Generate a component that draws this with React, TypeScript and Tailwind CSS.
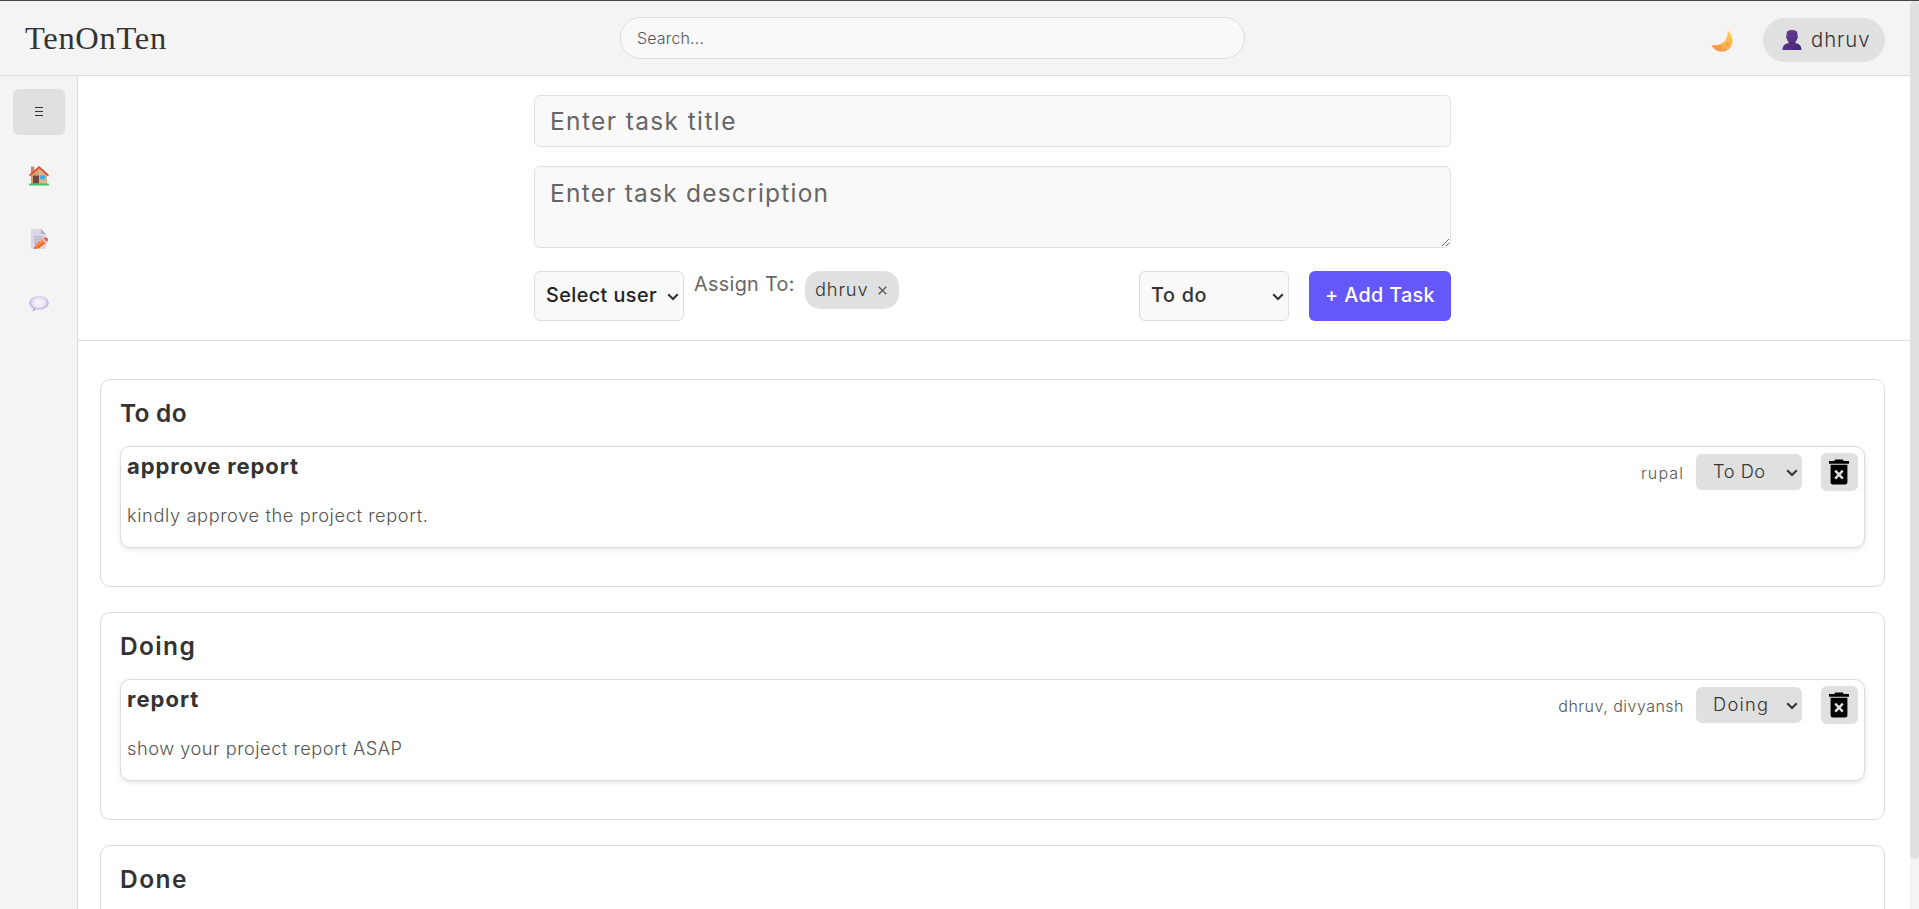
import React from "react";

type IconProps = { className?: string };

const Chevron = ({ className = "" }: IconProps) => (
  <svg width="12" height="8" viewBox="0 0 12 8" className={className} fill="none" stroke="#333" strokeWidth="2.1">
    <path d="M1.2 1.2 6 6l4.8-4.8" />
  </svg>
);

const House = () => (
  <svg width="20" height="20" viewBox="0 0 20 20">
    <rect x="2" y="0.6" width="3.2" height="7" fill="#c08a62" />
    <path d="M10 1.5 18 9v9H2V9z" fill="#d2a273" />
    <path d="M10 1.5 18 9v9H10z" fill="#dfb384" />
    <path d="M0.6 9.6 10 1.2l9.4 8.4" fill="none" stroke="#e0472f" strokeWidth="1.8" />
    <rect x="4" y="9.6" width="6" height="8" fill="#70463f" />
    <rect x="11.3" y="9.4" width="4.8" height="4" fill="#27aef3" />
    <rect x="0" y="17.4" width="20" height="2" rx="0.6" fill="#3cc46a" />
  </svg>
);

const Memo = () => (
  <svg width="20" height="22" viewBox="0 0 20 22">
    <path d="M2 1.6C2 1.2 2.3 1 2.700 1H12l5 5v14.600c0 .3-.3.500-.6.500H2.600c-.4 0-.6-.2-.6-.5z" fill="#ded6e6" />
    <path d="M12 1v4.400c0 .4.300.6.600.6H17z" fill="#b5adbc" />
    <path d="M5 8.800h9M5 11h9M5 13.200h6M5 15.300h4" stroke="#a9a1b2" strokeWidth="0.9" />
    <path d="m5.300 20.800 1-4.300 8.700-6.200 3 3.800-8.500 6.300z" fill="#fb8a3c" />
    <path d="m9.500 20.400 8.500-6.300-1.300-1.700-8.600 6.400z" fill="#f2662f" />
    <path d="m13.300 11.500 2.200-1.600 2.900 3.700-2.200 1.700z" fill="#d9cfe3" />
    <path d="m14.700 10.400 1.400-1c1.500-1 4 2.100 2.700 3.400l-1.300 1z" fill="#fb5745" />
    <path d="m5.300 20.800.5-2 1.700 1.500z" fill="#6b3f45" />
  </svg>
);

const Bubble = () => (
  <svg width="20" height="18" viewBox="0 0 20 18">
    <defs>
      <radialGradient id="bubble" cx="0.5" cy="0.42" r="0.58">
        <stop offset="0" stopColor="#fbf8fd" />
        <stop offset="0.55" stopColor="#ece3f4" />
        <stop offset="1" stopColor="#a893cf" />
      </radialGradient>
    </defs>
    <path d="M10 1.200c5.500 0 9.700 2.900 9.700 6.800s-4.200 6.700-9.700 6.700c-1.200 0-2.300-.1-3.300-.4-.7.800-1.500 1.600-3 1.900.4-.9.400-1.900.3-3C1.700 12 .3 10.200.3 8c0-3.900 4.200-6.800 9.700-6.800z" fill="url(#bubble)" />
  </svg>
);

const Moon = () => (
  <svg width="24" height="24" viewBox="0 0 24 24">
    <defs>
      <linearGradient id="moon" x1="1" y1="0" x2="0.2" y2="1">
        <stop offset="0" stopColor="#fcd35f" />
        <stop offset="0.6" stopColor="#fbb44c" />
        <stop offset="1" stopColor="#f28a4e" />
      </linearGradient>
    </defs>
    <path d="M17.600 1.200c3.900 3.200 6.200 9.200 4.300 14.500C18.700 24.300 6.500 25.400 1.200 15.900c6.300.9 11.300-.7 14-4.500 2-2.900 2.800-6.300 2.400-10.200z" fill="url(#moon)" />
    <circle cx="17.600" cy="15" r="1.900" fill="#f5a13f" />
    <circle cx="10.500" cy="19" r="1.300" fill="#f29642" />
    <circle cx="20.700" cy="11" r="0.9" fill="#f3aa45" />
    <circle cx="20" cy="7" r="0.7" fill="#f3b24a" />
    <circle cx="14.300" cy="20.500" r="0.8" fill="#ee9440" />
  </svg>
);

const Bust = () => (
  <svg width="20" height="20" viewBox="0 0 20 20">
    <defs>
      <linearGradient id="bust" x1="0" y1="0" x2="1" y2="1">
        <stop offset="0" stopColor="#6d3f9d" />
        <stop offset="1" stopColor="#43256f" />
      </linearGradient>
    </defs>
    <path d="M10 0c3.300 0 5.200 1 5.400 3.300L15.500 6c.8.500.6 2.200-.3 2.500-.3 1.700-1 2.900-2 3.700v.8c3.900.6 6.300 2.500 6.300 7H.5c0-4.500 2.400-6.400 6.300-7v-.8c-1-.8-1.700-2-2-3.700-.9-.3-1.100-2-.3-2.500l.1-2.700C4.800 1 6.700 0 10 0z" fill="url(#bust)" />
    <path d="M6.800 12.200c2 1.300 4.400 1.300 6.400 0" fill="none" stroke="#38205f" strokeWidth="0.8" />
  </svg>
);

const Trash = () => (
  <svg width="20" height="26" viewBox="0 0 20 26" className="mr-px">
    <path d="M0 1.900h5.200L6.300.6h7.400l1.100 1.300H20v2.900H0z" fill="#000" />
    <path d="M1.600 5.800h16.800v17.400c0 1.300-1 2.300-2.300 2.300H3.900c-1.300 0-2.300-1-2.300-2.300z" fill="#000" />
    <path d="m6.200 11.700 7.600 8M13.800 11.700l-7.600 8" stroke="#e0e0e0" strokeWidth="2.400" />
  </svg>
);

type Task = {
  title: string;
  titleClass: string;
  text: string;
  textClass: string;
  people: string;
  peopleClass: string;
  status: string;
  statusClass: string;
};

const columns: { name: string; nameClass: string; tasks: Task[] }[] = [
  {
    name: "To do",
    nameClass: "tracking-[0.25px]",
    tasks: [
      {
        title: "approve report",
        titleClass: "tracking-[0.89px]",
        text: "kindly approve the project report.",
        textClass: "tracking-[0.6px]",
        people: "rupal",
        peopleClass: "tracking-[1.1px]",
        status: "To Do",
        statusClass: "tracking-[0.5px]",
      },
    ],
  },
  {
    name: "Doing",
    nameClass: "tracking-[1.35px]",
    tasks: [
      {
        title: "report",
        titleClass: "tracking-[1px]",
        text: "show your project report ASAP",
        textClass: "tracking-[0.5px]",
        people: "dhruv, divyansh",
        peopleClass: "tracking-[0.49px]",
        status: "Doing",
        statusClass: "tracking-[1.25px]",
      },
    ],
  },
  { name: "Done", nameClass: "tracking-[1.45px]", tasks: [] },
];

const TaskCard = ({ task }: { task: Task }) => (
  <article className="flex h-[102px] justify-between rounded-[10px] border border-[#dcdcdc] bg-white pt-1.5 pr-1.5 pl-[6px] shadow-[0_2px_5px_rgba(0,0,0,0.1)]">
    <div>
      <h3 className={`h-[27px] text-[22px] leading-[27px] font-bold ${task.titleClass}`}>{task.title}</h3>
      <p className={`mt-[23px] text-[18.25px] leading-[24px] font-light text-[#555] ${task.textClass}`}>{task.text}</p>
    </div>
    <div className="flex h-[38px] items-center">
      <span className={`mt-px mr-3 text-[16px] font-light text-[#555] ${task.peopleClass}`}>{task.people}</span>
      <button className="flex h-9 w-[106px] items-center justify-between rounded-md bg-[#e0e0e0] pr-1 pl-[17px]">
        <span className={`text-[18.25px] font-light ${task.statusClass}`}>{task.status}</span>
        <Chevron className="mt-[2px]" />
      </button>
      <button className="ml-[19px] flex h-[38px] w-[37px] items-center justify-center rounded-md bg-[#e0e0e0]">
        <Trash />
      </button>
    </div>
  </article>
);

export default function App() {
  return (
    <div className="flex h-[909px] w-[1919px] overflow-hidden border-t border-[#464446] bg-white font-[Inter,sans-serif] text-[#333]">
      <div className="flex min-w-0 flex-1 flex-col">
        <header className="flex h-[75px] shrink-0 items-start justify-between border-b border-[#dcdcdc] bg-[#f4f4f4] pr-[25px] pl-[25px]">
          <div className="mt-[15px] w-[595px] font-['Liberation_Serif',serif] text-[32.5px] leading-[44px] tracking-[0.7px]">TenOnTen</div>
          <input
            className="mt-4 h-[42px] w-[625px] rounded-[21px] border border-[#dcdcdc] bg-[#f9f9f9] px-[16px] text-[16px] font-light tracking-[0.15px] placeholder:text-[#555]"
            placeholder="Search..."
          />
          <div className="flex flex-1 items-start justify-end">
            <button className="mt-[28px] mr-[29px]">
              <Moon />
            </button>
            <button className="mt-[17px] flex h-11 w-[122px] items-center gap-[9px] rounded-[22px] bg-[#e0e0e0] pl-[19px]">
              <Bust />
              <span className="text-[20.3px] font-light tracking-[0.95px]">dhruv</span>
            </button>
          </div>
        </header>
        <div className="flex min-h-0 flex-1">
          <nav className="flex w-[78px] shrink-0 flex-col items-center border-r border-[#dcdcdc] bg-[#f4f4f4] pt-[13px]">
            <button className="flex h-[46px] w-[52px] items-center justify-center rounded-md bg-[#e0e0e0]">
              <svg width="8" height="10" viewBox="0 0 8 10" shapeRendering="crispEdges" fill="#333">
                <path d="M0 0h8v1H0zM0 4h8v1H0zM0 8h8v1H0z" />
              </svg>
            </button>
            <button className="mt-[18px] flex h-[46px] items-center pb-px"><House /></button>
            <button className="mt-[18px] flex h-[46px] items-center pb-[2px]"><Memo /></button>
            <button className="mt-[18px] flex h-[46px] items-center pb-px"><Bubble /></button>
          </nav>
          <main className="flex min-w-0 flex-1 flex-col">
            <section className="flex h-[265px] shrink-0 justify-center border-b border-[#dcdcdc] pt-[19px] pr-[3px]">
              <div className="w-[917px]">
                <input
                  className="block h-[52px] w-full rounded-md border border-[#dfe1e1] bg-[#f9f9f9] pr-4 pl-[15px] text-[24.5px] tracking-[1.38px] placeholder:text-[#666]"
                  placeholder="Enter task title"
                />
                <textarea
                  className="mt-[19px] block h-[82px] w-full rounded-md border border-[#dfe1e1] bg-[#f9f9f9] pt-[11px] pr-4 pl-[15px] text-[24.5px] leading-[30px] tracking-[1.22px] placeholder:text-[#666]"
                  placeholder="Enter task description"
                />
                <div className="mt-[23px] flex items-start">
                  <button className="flex h-[50px] w-[150px] items-center justify-between rounded-md border border-[#dcdcdc] bg-[#f9f9f9] pr-1 pl-[11px]">
                    <span className="text-[19.75px] font-medium tracking-[0.45px] text-[#222]">Select user</span>
                    <Chevron className="mt-[2px]" />
                  </button>
                  <span className="ml-[10px] w-[111px] text-[19.75px] leading-[26px] tracking-[0.35px] text-[#666]">Assign To:</span>
                  <span className="flex h-[38px] w-[94px] items-center rounded-[15px] bg-[#e0e0e0] pl-[10px]">
                    <span className="w-[63px] text-[18.25px] font-light tracking-[0.85px]">dhruv</span>
                    <svg width="9" height="9" viewBox="0 0 9 9" stroke="#555" strokeWidth="1.3">
                      <path d="m.7.7 7.600 7.600M8.300.7.7 8.300" />
                    </svg>
                  </span>
                  <button className="ml-auto flex h-[50px] w-[150px] items-center justify-between rounded-md border border-[#dcdcdc] bg-[#f9f9f9] pr-1 pl-[11px]">
                    <span className="text-[19.75px] font-medium tracking-[0.7px]">To do</span>
                    <Chevron className="mt-[2px]" />
                  </button>
                  <button className="ml-5 h-[50px] w-[142px] rounded-md bg-[#6557fa] text-[19.75px] font-medium tracking-[0.37px] text-white">+ Add Task</button>
                </div>
              </div>
            </section>
            <section className="flex flex-col gap-[25px] pt-[38px] pr-[25px] pl-[22px]">
              {columns.map((column) => (
                <div key={column.name} className="h-[208px] shrink-0 rounded-[10px] border border-[#dcdcdc] px-[19px] pt-[18px]">
                  <h2 className={`mb-[18px] h-[30px] text-[24.5px] leading-[30px] font-semibold ${column.nameClass}`}>{column.name}</h2>
                  {column.tasks.map((task) => (
                    <TaskCard key={task.title} task={task} />
                  ))}
                </div>
              ))}
            </section>
          </main>
        </div>
      </div>
      <div className="h-full w-[9px] shrink-0 bg-[#f4f4f4]">
        <div className="h-[858px] rounded-[5px] bg-[#e0e0e0]" />
      </div>
    </div>
  );
}
